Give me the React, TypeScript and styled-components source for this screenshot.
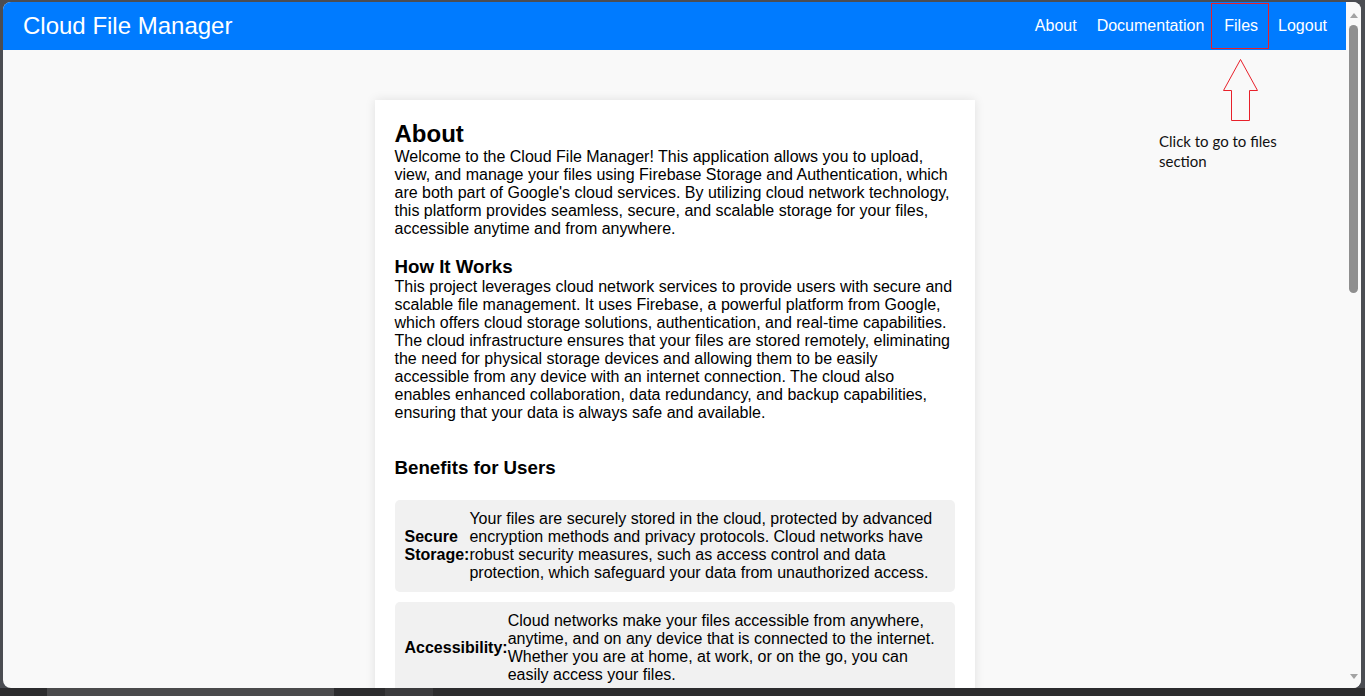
import styled, { createGlobalStyle } from "styled-components";

const GlobalStyle = createGlobalStyle`
  html, body {
    margin: 0;
    padding: 0;
  }
  body {
    background: #4b4d52;
    overflow: hidden;
    font-family: "Liberation Sans", Arial, sans-serif;
    color: #000;
  }
`;

const Screen = styled.div`
  height: 696px;
  display: flex;
  flex-direction: column;
`;

const Window = styled.div`
  height: 686px;
  margin: 2px 4px 0 3px;
  border-radius: 8px;
  overflow: hidden;
  display: flex;
  background: #f9f9f9;
`;

const Viewport = styled.div`
  flex: 1;
  position: relative;
  overflow: hidden;
`;

const Navbar = styled.nav`
  height: 48px;
  padding: 0 9px 0 20px;
  background: #007bff;
  color: #fff;
  display: flex;
  align-items: center;
  justify-content: space-between;
`;

const Brand = styled.div`
  font-size: 24px;
`;

const NavLinks = styled.div`
  display: flex;
`;

const NavLink = styled.a`
  color: #fff;
  text-decoration: none;
  font-size: 16px;
  padding: 0 10px;
`;

const Card = styled.main`
  width: 560px;
  margin: 50px auto 0;
  padding: 20px;
  background: #fff;
  box-shadow: 0 0 10px rgba(0, 0, 0, 0.1);
`;

const Title = styled.h1`
  margin: 0;
  font-size: 24px;
  line-height: 28px;
`;

const Heading = styled.h3<{ $top: number; $bottom: number }>`
  margin: ${(p) => p.$top}px 0 ${(p) => p.$bottom}px;
  font-size: 18.72px;
  line-height: 22px;
`;

const Text = styled.p`
  margin: 0;
  font-size: 16px;
  line-height: 18px;
`;

const Benefit = styled.div`
  display: flex;
  align-items: center;
  padding: 10px;
  margin-bottom: 10px;
  background: #f1f1f1;
  border-radius: 5px;
  font-size: 16px;
  line-height: 18px;
`;

const BenefitLabel = styled.strong``;

const BenefitText = styled.span``;

const Scrollbar = styled.div`
  width: 15px;
  background: #f9f9f9;
  display: flex;
  flex-direction: column;
  align-items: center;
`;

const ScrollArrow = styled.div<{ $down?: boolean }>`
  width: 0;
  height: 0;
  border-left: 4px solid transparent;
  border-right: 4px solid transparent;
  ${(p) =>
    p.$down
      ? "border-top: 5px solid #a3a3a3; margin-top: auto; margin-bottom: 9px;"
      : "border-bottom: 5px solid #a3a3a3; margin-top: 11px;"}
`;

const ScrollThumb = styled.div`
  width: 9px;
  height: 268px;
  margin-top: 7px;
  border-radius: 5px;
  background: #8f8f8f;
`;

const Taskbar = styled.div`
  flex: 1;
  display: flex;
`;

const TaskSegment = styled.div<{ $w: number; $c: string }>`
  width: ${(p) => p.$w}px;
  background: ${(p) => p.$c};
`;

const HighlightBox = styled.div`
  position: absolute;
  left: 1208px;
  top: 1px;
  width: 56px;
  height: 44px;
  border: 1px solid #e8202a;
  pointer-events: none;
`;

const ArrowMark = styled.svg`
  position: absolute;
  left: 1218px;
  top: 55px;
`;

const Note = styled.div`
  position: absolute;
  left: 1156px;
  top: 129px;
  width: 150px;
  font-family: Lato, "Liberation Sans", sans-serif;
  font-size: 15px;
  line-height: 20px;
  color: #111;
`;

export default function App() {
  return (
    <>
      <GlobalStyle />
      <Screen>
        <Window>
          <Viewport>
            <Navbar>
              <Brand>Cloud File Manager</Brand>
              <NavLinks>
                <NavLink href="#">About</NavLink>
                <NavLink href="#">Documentation</NavLink>
                <NavLink href="#">Files</NavLink>
                <NavLink href="#">Logout</NavLink>
              </NavLinks>
            </Navbar>

            <Card>
              <Title>About</Title>
              <Text>
                Welcome to the Cloud File Manager! This application allows you to upload, view, and
                manage your files using Firebase Storage and Authentication, which are both part of
                Google's cloud services. By utilizing cloud network technology, this platform provides
                seamless, secure, and scalable storage for your files, accessible anytime and from
                anywhere.
              </Text>

              <Heading $top={18} $bottom={0}>
                How It Works
              </Heading>
              <Text>
                This project leverages cloud network services to provide users with secure and
                scalable file management. It uses Firebase, a powerful platform from Google, which
                offers cloud storage solutions, authentication, and real-time capabilities. The cloud
                infrastructure ensures that your files are stored remotely, eliminating the need for
                physical storage devices and allowing them to be easily accessible from any device
                with an internet connection. The cloud also enables enhanced collaboration, data
                redundancy, and backup capabilities, ensuring that your data is always safe and
                available.
              </Text>

              <Heading $top={35} $bottom={21}>
                Benefits for Users
              </Heading>
              <Benefit>
                <BenefitLabel>Secure Storage:</BenefitLabel>
                <BenefitText>
                  Your files are securely stored in the cloud, protected by advanced encryption
                  methods and privacy protocols. Cloud networks have robust security measures, such as
                  access control and data protection, which safeguard your data from unauthorized
                  access.
                </BenefitText>
              </Benefit>
              <Benefit>
                <BenefitLabel>Accessibility:</BenefitLabel>
                <BenefitText>
                  Cloud networks make your files accessible from anywhere, anytime, and on any device
                  that is connected to the internet. Whether you are at home, at work, or on the go,
                  you can easily access your files.
                </BenefitText>
              </Benefit>
            </Card>

            <HighlightBox />
            <ArrowMark width="38" height="66" viewBox="0 0 38 66">
              <polygon
                points="19.5,2.5 2.5,33.5 10.5,33.5 10.5,63.5 28.5,63.5 28.5,33.5 36.5,33.5"
                fill="none"
                stroke="#e8202a"
                strokeWidth="1"
              />
            </ArrowMark>
            <Note>Click to go to files section</Note>
          </Viewport>

          <Scrollbar>
            <ScrollArrow />
            <ScrollThumb />
            <ScrollArrow $down />
          </Scrollbar>
        </Window>

        <Taskbar>
          <TaskSegment $w={47} $c="#2c2c2e" />
          <TaskSegment $w={287} $c="#4a4a4c" />
          <TaskSegment $w={51} $c="#2c2c2e" />
          <TaskSegment $w={48} $c="#3b3b3d" />
          <TaskSegment $w={932} $c="#2c2c2e" />
        </Taskbar>
      </Screen>
    </>
  );
}
